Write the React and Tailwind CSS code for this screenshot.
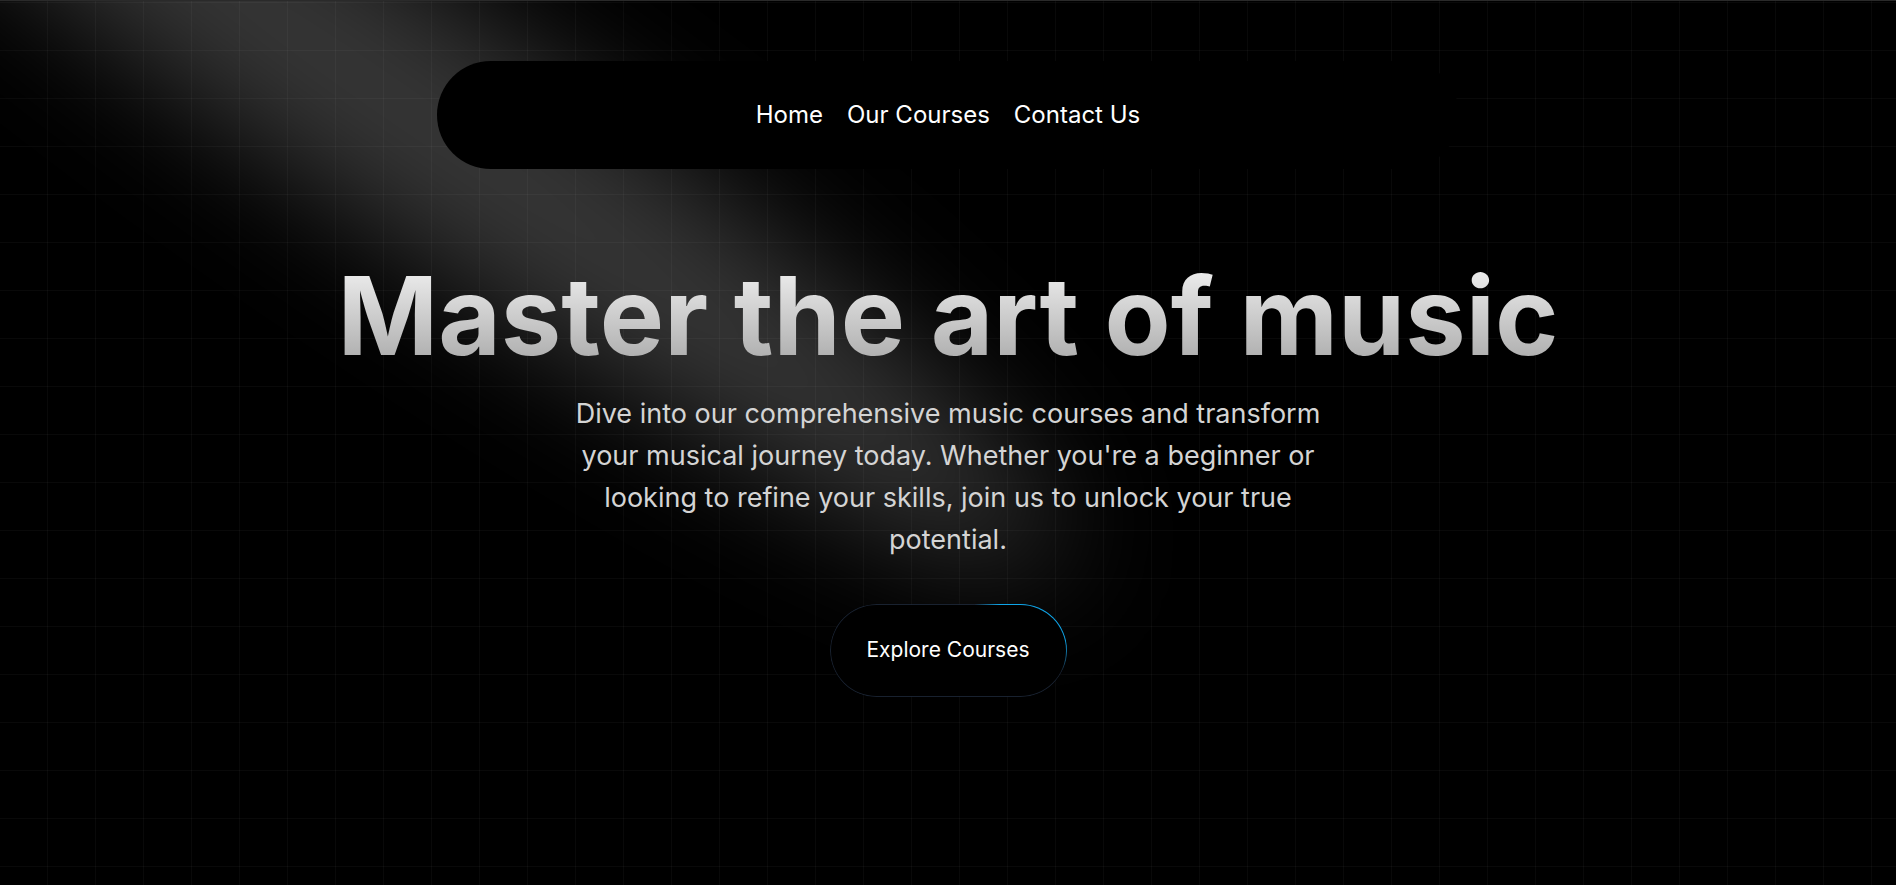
import React from 'react'

function Spotlight() {
  return (
    <svg
      className="pointer-events-none absolute left-[-405px] top-[-650px] z-[1] h-[1496px] w-[1593px]"
      viewBox="0 0 3787 2842"
      fill="none"
      xmlns="http://www.w3.org/2000/svg"
    >
      <g filter="url(#spot-blur)">
        <ellipse
          cx="1924.71"
          cy="273.501"
          rx="1924.71"
          ry="273.501"
          transform="matrix(-0.822377 -0.568943 -0.568943 0.822377 3631.88 2291.09)"
          fill="white"
          fillOpacity="0.21"
        />
      </g>
      <defs>
        <filter
          id="spot-blur"
          x="0.860352"
          y="0.838989"
          width="3785.16"
          height="2840.26"
          filterUnits="userSpaceOnUse"
          colorInterpolationFilters="sRGB"
        >
          <feFlood floodOpacity="0" result="BackgroundImageFix" />
          <feBlend mode="normal" in="SourceGraphic" in2="BackgroundImageFix" result="shape" />
          <feGaussianBlur stdDeviation="151" result="effect1_foregroundBlur" />
        </filter>
      </defs>
    </svg>
  )
}

function ExploreButton() {
  return (
    <div className="relative h-[93px] w-[237px] overflow-hidden rounded-full p-px">
      <div className="absolute inset-0 rounded-full bg-[#1e293b]/80" />
      <div className="absolute left-[135px] top-[-70px] h-[150px] w-[150px] bg-[radial-gradient(#0ea5e9_38%,transparent_62%)]" />
      <button
        type="button"
        className="relative flex h-full w-full items-center justify-center rounded-full bg-black text-[21px] text-white"
      >
        Explore Courses
      </button>
    </div>
  )
}

export default function App() {
  return (
    <div className="relative h-[885px] w-full overflow-hidden border-t border-[#2a2a2a] bg-black bg-[linear-gradient(to_right,rgba(255,255,255,0.035)_1px,transparent_1px),linear-gradient(to_bottom,rgba(255,255,255,0.035)_1px,transparent_1px)] bg-[size:48px_48px] bg-[position:-1px_1px] font-['Inter',sans-serif] antialiased">
      <Spotlight />

      <div className="relative z-10 flex flex-col items-center">
        <nav className="mt-[60px] flex h-[108px] w-[1022px] items-center justify-center gap-6 rounded-full bg-black text-2xl text-white">
          <a href="#">Home</a>
          <a href="#">Our Courses</a>
          <a href="#">Contact Us</a>
        </nav>

        <h1 className="mt-[82px] bg-linear-to-b from-neutral-50 to-neutral-400 bg-clip-text text-[108px] font-bold leading-[1.2] text-transparent">
          Master the art of music
        </h1>

        <p className="mt-[12px] max-w-3xl text-center text-[27px] leading-[42px] text-neutral-300">
          Dive into our comprehensive music courses and transform your musical journey today. Whether you're a beginner or looking to refine your skills, join us to unlock your true potential.
        </p>

        <div className="mt-[43px]">
          <ExploreButton />
        </div>
      </div>
    </div>
  )
}
